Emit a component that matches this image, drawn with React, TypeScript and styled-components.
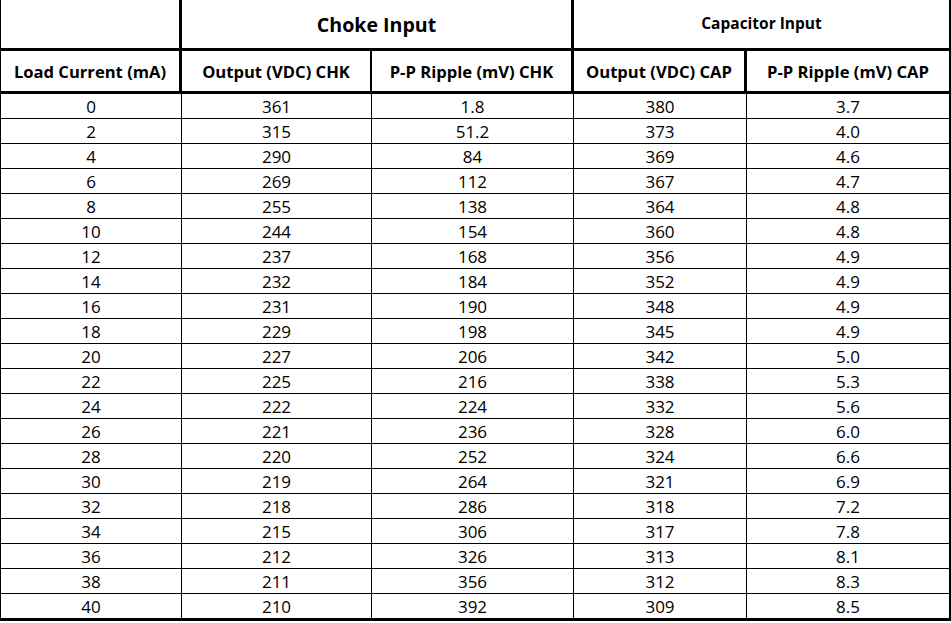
import React from "react";
import styled, { createGlobalStyle } from "styled-components";

const Global = createGlobalStyle`
  html, body { margin: 0; padding: 0; background: #fff; }
  body { font-family: "Open Sans", "Liberation Sans", sans-serif; color: #000; }
`;

const COLS = "182px 190px 202px 173px 204px";

const Table = styled.div`
  width: 951px;
  display: flex;
  flex-direction: column;
`;

const Row = styled.div<{ $h: number }>`
  display: grid;
  grid-template-columns: ${COLS};
  height: ${(p) => p.$h}px;
`;

const Cell = styled.div<{
  $r?: number;
  $b?: number;
  $l?: number;
  $span?: number;
  $size?: number;
  $bold?: boolean;
  $pt?: number;
}>`
  box-sizing: border-box;
  grid-column: span ${(p) => p.$span ?? 1};
  border-right: ${(p) => p.$r ?? 1}px solid #000;
  border-bottom: ${(p) => p.$b ?? 1}px solid #000;
  border-left: ${(p) => p.$l ?? 0}px solid #000;
  display: flex;
  align-items: center;
  justify-content: center;
  padding-top: ${(p) => p.$pt ?? 0}px;
  font-size: ${(p) => p.$size ?? 17}px;
  font-weight: ${(p) => (p.$bold ? 700 : 400)};
  white-space: nowrap;
  overflow: hidden;
  line-height: 1;
`;

const data: [string, string, string, string, string][] = [
  ["0", "361", "1.8", "380", "3.7"],
  ["2", "315", "51.2", "373", "4.0"],
  ["4", "290", "84", "369", "4.6"],
  ["6", "269", "112", "367", "4.7"],
  ["8", "255", "138", "364", "4.8"],
  ["10", "244", "154", "360", "4.8"],
  ["12", "237", "168", "356", "4.9"],
  ["14", "232", "184", "352", "4.9"],
  ["16", "231", "190", "348", "4.9"],
  ["18", "229", "198", "345", "4.9"],
  ["20", "227", "206", "342", "5.0"],
  ["22", "225", "216", "338", "5.3"],
  ["24", "222", "224", "332", "5.6"],
  ["26", "221", "236", "328", "6.0"],
  ["28", "220", "252", "324", "6.6"],
  ["30", "219", "264", "321", "6.9"],
  ["32", "218", "286", "318", "7.2"],
  ["34", "215", "306", "317", "7.8"],
  ["36", "212", "326", "313", "8.1"],
  ["38", "211", "356", "312", "8.3"],
  ["40", "210", "392", "309", "8.5"],
];

const headers = [
  "Load Current (mA)",
  "Output (VDC) CHK",
  "P-P Ripple (mV) CHK",
  "Output (VDC) CAP",
  "P-P Ripple (mV) CAP",
];
const headRight = [3, 2, 3, 3, 2];

export default function App() {
  return (
    <>
      <Global />
      <Table>
        <Row $h={51}>
          <Cell $l={1} $r={3} $b={3} />
          <Cell $span={2} $r={3} $b={3} $size={19.6} $bold $pt={1}>
            Choke Input
          </Cell>
          <Cell $span={2} $r={2} $b={3} $size={15.5} $bold>
            Capacitor Input
          </Cell>
        </Row>
        <Row $h={43}>
          {headers.map((h, i) => (
            <Cell key={h} $l={i === 0 ? 1 : 0} $r={headRight[i]} $b={3} $size={16.6} $bold $pt={3}>
              {h}
            </Cell>
          ))}
        </Row>
        {data.map((r, ri) => (
          <Row key={ri} $h={ri === data.length - 1 ? 27 : 25}>
            {r.map((v, ci) => (
              <Cell
                key={ci}
                $l={ci === 0 ? 1 : 0}
                $r={ci === 4 ? 2 : 1}
                $b={ri === data.length - 1 ? 3 : 1}
                $pt={1}
              >
                {v}
              </Cell>
            ))}
          </Row>
        ))}
      </Table>
    </>
  );
}
